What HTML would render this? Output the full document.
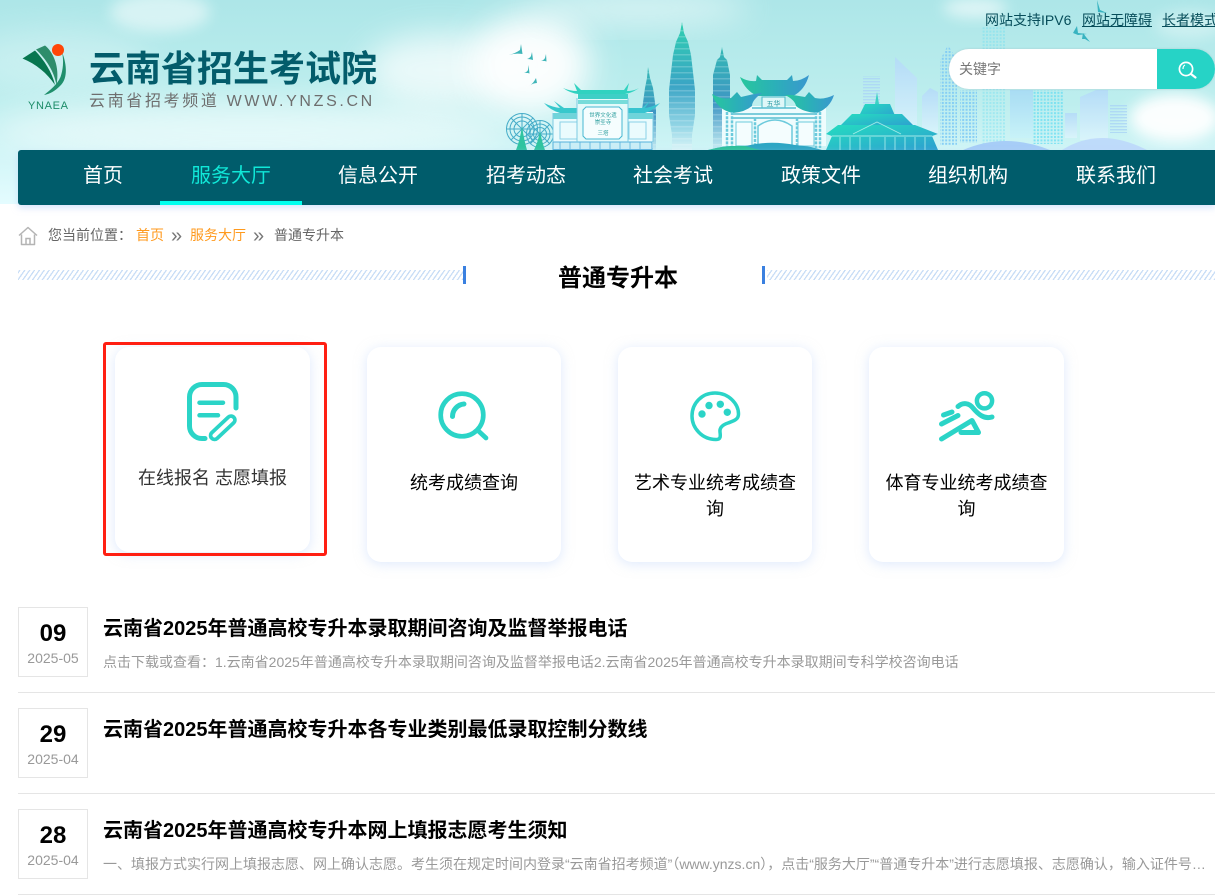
<!DOCTYPE html>
<html lang="zh-CN">
<head>
<meta charset="utf-8">
<title>普通专升本</title>
<style>
*{box-sizing:border-box;margin:0;padding:0}
html,body{width:1215px;height:896px;overflow:hidden;background:#fff;font-family:"Liberation Sans","Noto Sans CJK SC",sans-serif;color:#000}
a{color:inherit;text-decoration:none}
#page{position:relative;width:1215px;height:896px;overflow:hidden}
.t{position:absolute;white-space:nowrap}
.nav{position:absolute;left:18px;top:150px;width:1197px;height:55px;background:#005c6b;border-radius:3px 0 0 3px;box-shadow:0 3px 7px rgba(190,212,250,.6)}
.nav a{position:absolute;top:0;line-height:53px;font-size:20px;color:#fff;width:142px;text-align:center}
.nav a.on{color:#10e8d8}
.nav i{position:absolute;left:142px;top:51px;width:142px;height:4px;background:#00ffee}
.card{position:absolute;top:347px;width:195px;height:215px;background:#fff;border-radius:14px;box-shadow:0 2px 12px rgba(190,212,250,.5);text-align:center;font-size:18px;line-height:26px;padding:123px 15px 0}
.date{position:absolute;left:18px;width:70px;height:70px;border:1px solid #e5e5e5;text-align:center}
.date b{display:block;font-size:24px;line-height:28px;margin-top:12px}
.date span{display:block;font-size:14px;line-height:18px;color:#999;margin-top:1px}
.h{position:absolute;left:103px;font-size:20px;font-weight:bold;line-height:28px;white-space:nowrap}
.d{position:absolute;left:103px;width:1106px;font-size:14px;line-height:20px;color:#999;white-space:nowrap;overflow:hidden;text-overflow:ellipsis}
.l{position:absolute;left:18px;width:1197px;height:1px;background:#e5e5e5}
.stripe{position:absolute;top:270px;height:10px;background:repeating-linear-gradient(-55deg,#c8ddf6 0,#c8ddf6 1.3px,#fff 1.3px,#fff 4px)}
.bar{position:absolute;top:266px;width:3px;height:18px;background:#3a80e0}
</style>
</head>
<body>
<div id="page">
<svg width="1215" height="204" viewBox="0 0 1215 204" style="position:absolute;left:0;top:0">
<defs>
<linearGradient id="sky" x1="0" y1="0" x2="0" y2="1"><stop offset="0" stop-color="#ade6e8"/><stop offset=".5" stop-color="#bdeeee"/><stop offset="1" stop-color="#e4fcff"/></linearGradient>
<filter id="b1" x="-50%" y="-50%" width="200%" height="200%"><feGaussianBlur stdDeviation="16"/></filter>
<filter id="b2" x="-50%" y="-50%" width="200%" height="200%"><feGaussianBlur stdDeviation="7"/></filter>
<linearGradient id="pag" x1="0" y1="0" x2="0" y2="1"><stop offset="0" stop-color="#2ecfb0"/><stop offset=".5" stop-color="#3ba5c5"/><stop offset=".8" stop-color="#8fd3e4"/><stop offset="1" stop-color="#dcf6f8"/></linearGradient>
<linearGradient id="pag2" x1="0" y1="0" x2="0" y2="1"><stop offset="0" stop-color="#32b8b4"/><stop offset=".55" stop-color="#3f96c4"/><stop offset="1" stop-color="#c6edf3"/></linearGradient>
<linearGradient id="roof" x1="0" y1="0" x2="1" y2="0"><stop offset="0" stop-color="#28c79c"/><stop offset=".5" stop-color="#2bb0b8"/><stop offset="1" stop-color="#3a97cf"/></linearGradient>
<linearGradient id="dai" x1="0" y1="0" x2="1" y2="1"><stop offset="0" stop-color="#25dcc0"/><stop offset="1" stop-color="#2d9fd0"/></linearGradient>
<linearGradient id="bld" x1="0" y1="0" x2="0" y2="1"><stop offset="0" stop-color="#b4daf9"/><stop offset="1" stop-color="#dcf5fc"/></linearGradient>
<linearGradient id="bl2" x1="0" y1="0" x2="0" y2="1"><stop offset="0" stop-color="#9fd3f8"/><stop offset="1" stop-color="#c6f2fa"/></linearGradient>
<pattern id="tier" width="8" height="6" patternUnits="userSpaceOnUse"><rect y="0" width="8" height="1.500" fill="#fff" opacity=".2"/></pattern>
<pattern id="win" width="3.400" height="3.400" patternUnits="userSpaceOnUse"><rect width="2" height="2" fill="#7cc9f6"/></pattern>
<pattern id="win2" width="3.400" height="3.400" patternUnits="userSpaceOnUse"><rect width="2" height="2" fill="#5fdcf2"/></pattern>
<pattern id="hl" width="4" height="3" patternUnits="userSpaceOnUse"><rect width="4" height="1.400" fill="#acd6f6"/></pattern>
</defs>
<rect width="1215" height="204" fill="url(#sky)"/>
<g fill="#fff">
<ellipse cx="160" cy="12" rx="50" ry="20" opacity=".5" filter="url(#b2)"/>
<ellipse cx="60" cy="60" rx="90" ry="30" opacity=".25" filter="url(#b1)"/>
<ellipse cx="440" cy="70" rx="75" ry="36" opacity=".7" filter="url(#b1)"/>
<ellipse cx="530" cy="65" rx="60" ry="50" opacity=".95" filter="url(#b1)"/>
<ellipse cx="640" cy="8" rx="110" ry="16" opacity=".55" filter="url(#b1)"/>
<ellipse cx="250" cy="130" rx="260" ry="30" opacity=".5" filter="url(#b1)"/>
<ellipse cx="975" cy="8" rx="32" ry="10" opacity=".6" filter="url(#b2)"/>
<ellipse cx="1175" cy="118" rx="45" ry="24" opacity=".95" filter="url(#b2)"/>
<ellipse cx="1190" cy="25" rx="35" ry="14" opacity=".35" filter="url(#b2)"/>
</g>

<!-- city -->
<g opacity=".85">
<rect x="863" y="76" width="17" height="60" fill="url(#hl)"/>
<polygon points="895,57 917,78 917,135 895,135" fill="url(#bld)"/>
<polygon points="922,96 930,88 938,92 938,135 922,135" fill="url(#bld)"/>
<polygon points="940,60 948,45 957,60 957,145 940,145" fill="url(#win)"/>
<rect x="960" y="90" width="17" height="53" fill="url(#win)"/>
<rect x="982" y="27" width="23" height="120" fill="url(#win2)" opacity=".4"/>
<rect x="1010" y="90" width="23" height="48" fill="url(#bl2)" opacity=".75"/>
<rect x="1033" y="90" width="30" height="54" fill="url(#win2)" opacity=".8"/>
<rect x="1065" y="113" width="12" height="25" fill="url(#bld)"/>
<polygon points="1080,97 1096,90 1108,90 1108,140 1080,140" fill="url(#bld)"/>
<rect x="1110" y="105" width="17" height="28" fill="url(#hl)"/>
</g>
<path d="M963 150Q1005 132 1050 150Z" fill="#a7cdf7"/>
<path d="M1062 150Q1100 126 1147 150Z" fill="#bcd8fb" opacity=".9"/>

<!-- birds -->
<g fill="#3eb5b8">
<path d="M509 55Q516 53 520 50L521 44 522.500 54Q515 53 509 55Z"/>
<path d="M527 59Q530 58 531 56L532 52 533 60Q530 59 527 59Z"/>
<path d="M541 61Q544 60 545 58L546 54 546.500 61.500Q544 60.500 541 61Z"/>
<path d="M524 73Q527 72 528 70L528.500 65 529.500 73.500Q527 72.500 524 73Z"/>
<path d="M529 86Q533 84 536 78L537 83Q533 83 529 86Z"/>
<path d="M1073 33L1077 26 1078 33 1087 34 1078 35Z" fill="#38b3c0"/>
<path d="M1097 0L1100 10 1107 13 1098 12Z" fill="#38b3c0"/>
<path d="M1082 39L1083 33 1086 37 1090 42 1085 39Z" fill="#38b3c0"/>
</g>

<!-- pagodas -->
<g id="pg">
<polygon points="648,67 650,78 653,88 656,110 656,150 642,150 642,110 645,88 647,78" fill="url(#pag2)"/>
<polygon points="722,47 724,57 727,60 730,75 730,150 713,150 713,75 717,60 720,57" fill="url(#pag2)"/>
<polygon points="682,22 684,33 688,42 691,55 695,90 695,115 692,135 692,150 672,150 672,135 669,115 669,90 673,55 676,42 680,33" fill="url(#pag)"/>
<polygon points="648,67 650,78 653,88 656,110 656,150 642,150 642,110 645,88 647,78" fill="url(#tier)"/>
<polygon points="722,47 724,57 727,60 730,75 730,150 713,150 713,75 717,60 720,57" fill="url(#tier)"/>
<polygon points="682,22 684,33 688,42 691,55 695,90 695,115 692,135 692,150 672,150 672,135 669,115 669,90 673,55 676,42 680,33" fill="url(#tier)"/>
</g>

<!-- water wheels -->
<g fill="none" stroke="#45acc8" stroke-width="1">
<circle cx="522" cy="129" r="15.500"/><circle cx="522" cy="129" r="12"/><circle cx="522" cy="129" r="8"/>
<circle cx="540" cy="134" r="13.500"/><circle cx="540" cy="134" r="10"/><circle cx="540" cy="134" r="6.500"/>
<path d="M506.500 129h31M522 113.500v31M511 118l22 22M533 118l-22 22M526.500 134h27M540 120.500v27M530 124l20 20M550 124l-20 20"/>
</g>
<path d="M522 126Q524 140 527 150H516Q520 140 522 126Z" fill="#2fc4a0"/>
<path d="M540 131Q542 142 545 150H534Q538 142 540 131Z" fill="#2fc4a0"/>

<!-- left gate -->
<g>
<rect x="553" y="112" width="100" height="36" fill="#eafbfd"/>
<rect x="577" y="92" width="51" height="50" fill="#e4fafa"/>
<path d="M563 88Q570 91 577 91L574 83 581 90H624L629 83 627 91Q634 91 639 88 632 93 625 94H578Q570 93 563 88Z" fill="#30d2c0"/>
<path d="M578 94H628V99H578Z" fill="#3ecfc6"/>
<path d="M578 100H628V104H578Z" fill="#5bd4d2" opacity=".8"/>
<path d="M544 103Q552 107 560 108L554 101 564 108H577V113H560Q550 110 544 103Z" fill="#38c8cc"/>
<path d="M660 103Q652 107 645 108L650 101 642 108H628V113H645Q654 110 660 103Z" fill="#38c4d0"/>
<rect x="553" y="113" width="24" height="6" fill="#6fd4da"/>
<rect x="628" y="113" width="25" height="6" fill="#6fd4da"/>
<path d="M586 107H619L622 110V136L619 139H586L583 136V110Z" fill="#f5fdfe" stroke="#47b8d2" stroke-width="1"/>
<g fill="#2f9f9f" font-size="5.500" text-anchor="middle" font-family="Liberation Sans,Noto Sans CJK SC,sans-serif">
<text x="603" y="117">世界文化遗</text><text x="603" y="124">崇圣寺</text><text x="603" y="135">三塔</text>
</g>
<rect x="560" y="122" width="17" height="17" fill="none" stroke="#8ad2e6" stroke-width="1"/>
<rect x="629" y="122" width="17" height="17" fill="none" stroke="#8ad2e6" stroke-width="1"/>
<rect x="553" y="142" width="99" height="7.500" fill="#cbeef6" stroke="#56b2dc" stroke-width="1"/>
<path d="M560 142v8M570 142v8M580 142v8M590 142v8M600 142v8M610 142v8M620 142v8M630 142v8M640 142v8" stroke="#56b2dc" stroke-width=".8"/>
<path d="M553 113v29M577 98v44M628 98v44M653 113v29" stroke="#7ccbe2" stroke-width="1"/>
</g>

<!-- centre arch -->
<g>
<rect x="722" y="106" width="104" height="40" fill="#eefcfd"/>
<path d="M740 77Q748 82 756 81L757 75 762 80 787 80 792 75 793 81Q801 81 809 75 805 90 793 96H757Q745 90 740 77Z" fill="url(#roof)"/>
<path d="M712 94Q722 100 731 98L737 92 741 97 754 94 762 93Q752 100 752 106 745 112 733 113 717 110 712 94Z" fill="url(#roof)"/>
<path d="M834 95Q824 100 815 98L809 92 805 97 793 95 785 95Q795 100 796 106 803 112 817 113 830 108 834 95Z" fill="url(#roof)"/>
<rect x="762" y="97" width="23" height="11" fill="#dff7f8" stroke="#48b8c6" stroke-width="1"/>
<text x="773.500" y="106" font-size="7" fill="#2a9aa2" text-anchor="middle" font-family="Liberation Sans,Noto Sans CJK SC,sans-serif">五华</text>
<path d="M752 108H796M733 114H816M733 118H816" stroke="#56bdd0" stroke-width="1.500"/>
<path d="M727 112V148M732 112V148M755 118V146M797 118V146M820 112V148M816 112V148" stroke="#6ccadc" stroke-width="2.500" stroke-dasharray="3 1.200"/>
<path d="M736 122H752V146H736ZM798 122H814V146H798Z" fill="#f4fdfe" stroke="#6ccadc" stroke-width="1"/>
<path d="M758 146V126Q775 114 792 126V146" fill="#f4fdfe" stroke="#6ccadc" stroke-width="1.500"/>
<path d="M708 150Q725 145 745 146 770 140 795 145 810 146 822 150Z" fill="#2ea6c4"/>
<path d="M708 150Q725 145 745 146L760 150Z" fill="#2cc09a"/>
</g>

<!-- dai temple -->
<g>
<polygon points="877,92 879,104 875,104" fill="#3dd2c4"/>
<polygon points="865,104 890,104 896,118 858,118" fill="url(#dai)"/>
<polygon points="852,114 902,114 914,126 840,126" fill="url(#dai)"/>
<polygon points="826,134 838,125 915,125 938,134 932,136 938,150 826,150 832,136" fill="url(#dai)"/>
<path d="M853 134L877 122 901 134M832 136H932M840 137v13M850 137v13M860 137v13M870 137v13M885 137v13M895 137v13M905 137v13M915 137v13M925 137v13" fill="none" stroke="#c0f5ef" stroke-width=".9" opacity=".8"/>
</g>

<!-- logo -->
<path d="M22.500 58.500L35 50.500C44 60 52 72 55 85 47 73 36 64 22.500 58.500Z" fill="#07764f"/>
<path d="M36 49.500 45 45.500C53 52 60 66 56.500 85 54 71 46 59 36 49.500Z" fill="#2d8d6b"/>
<path d="M62 52C66 62 69 78 60 86 55 91 50 94 44 95 50 90 57 85 60.500 77 63 70 64 61 62 52Z" fill="#1f8f6c"/>
<circle cx="58" cy="50" r="6" fill="#ff4607"/>
<text x="28" y="109" font-size="11" fill="#1c8c68" textLength="40" font-family="Liberation Sans">YNAEA</text>
</svg>

<div class="t" style="left:89px;top:47px;font-size:36px;line-height:44px;font-weight:bold;color:#035c6b">云南省招生考试院</div>
<div class="t" style="left:89px;top:92px;font-size:16px;line-height:20px;letter-spacing:2.650px;color:#6e6e6e">云南省招考频道 WWW.YNZS.CN</div>

<div class="t" style="left:985px;top:11px;font-size:14px;line-height:18px;color:#064d5a">网站支持IPV6</div>
<a class="t" style="left:1082px;top:11px;font-size:14px;line-height:18px;color:#064d5a;text-decoration:underline">网站无障碍</a>
<a class="t" style="left:1162px;top:11px;font-size:14px;line-height:18px;color:#064d5a;text-decoration:underline">长者模式</a>

<div style="position:absolute;left:949px;top:49px;width:266px;height:40px;background:#fff;border-radius:20px;box-shadow:0 0 2px rgba(150,170,180,.45)"></div>
<div class="t" style="left:959px;top:60px;font-size:14px;line-height:18px;color:#757575">关键字</div>
<div style="position:absolute;left:1157px;top:49px;width:58px;height:40px;background:#26d3c6;border-radius:0 20px 20px 0"></div>
<svg width="24" height="24" viewBox="0 0 24 24" style="position:absolute;left:1176px;top:59px">
<circle cx="10" cy="10" r="6.600" fill="none" stroke="#fff" stroke-width="1.700"/>
<path d="M7 10q0-3 2-4" fill="none" stroke="#fff" stroke-width="1.200"/>
<path d="M15 15l4.500 3.500" stroke="#fff" stroke-width="2.200" stroke-linecap="round"/>
</svg>

<div class="nav">
<a style="left:14px">首页</a>
<a class="on" style="left:142px">服务大厅</a>
<a style="left:289px">信息公开</a>
<a style="left:437px">招考动态</a>
<a style="left:584px">社会考试</a>
<a style="left:732px">政策文件</a>
<a style="left:879px">组织机构</a>
<a style="left:1027px">联系我们</a>
<i></i>
</div>

<!-- breadcrumb -->
<svg width="20" height="20" viewBox="0 0 20 20" style="position:absolute;left:18px;top:226px">
<path d="M1 9.500 10 1.500l9 8M3.500 8.500V18.500h13V8.500" fill="none" stroke="#b4b4b4" stroke-width="1.500" stroke-linejoin="round"/>
<path d="M8 18.500V12.500h4v6" fill="none" stroke="#b4b4b4" stroke-width="1.500"/>
</svg>
<div class="t" style="left:48px;top:226px;font-size:14px;line-height:18px;color:#666">您当前位置：</div>
<a class="t" style="left:136px;top:226px;font-size:14px;line-height:18px;color:#ff9a1e">首页</a>
<div class="t" style="left:171px;top:224px;font-size:20px;line-height:24px;color:#777">»</div>
<a class="t" style="left:190px;top:226px;font-size:14px;line-height:18px;color:#ff9a1e">服务大厅</a>
<div class="t" style="left:253px;top:224px;font-size:20px;line-height:24px;color:#777">»</div>
<div class="t" style="left:274px;top:226px;font-size:14px;line-height:18px;color:#666">普通专升本</div>

<!-- section title -->
<div class="stripe" style="left:18px;width:445px"></div>
<div class="bar" style="left:463px"></div>
<div class="t" style="left:558px;top:262px;font-size:24px;line-height:34px;font-weight:bold;color:#000">普通专升本</div>
<div class="bar" style="left:762px"></div>
<div class="stripe" style="left:767px;width:448px"></div>

<!-- cards -->
<div class="card" style="left:115px;width:195px;height:205px;color:#333;padding:118px 0 0;"><span style="font-size:18px">在线报名 志愿填报</span></div>
<div class="card" style="left:367px;width:194px">统考成绩查询</div>
<div class="card" style="left:618px;width:194px">艺术专业统考成绩查询</div>
<div class="card" style="left:869px;width:195px">体育专业统考成绩查询</div>
<div style="position:absolute;left:103px;top:342px;width:224px;height:214px;border:3px solid #ff1f12;border-radius:3px"></div>

<svg width="1215" height="896" viewBox="0 0 1215 896" style="position:absolute;left:0;top:0;pointer-events:none" fill="none" stroke="#2bd4c7" stroke-linecap="round" stroke-linejoin="round">
<!-- form -->
<path d="M205 438.500H202A12.500 12.500 0 0 1 189.500 426V397A12.500 12.500 0 0 1 202 384.500H223.500A12.500 12.500 0 0 1 236 397V408" stroke-width="5"/>
<path d="M199.500 402.700H223M199.500 415.300H218" stroke-width="4.500"/>
<path d="M214.500 435.500 231 420" stroke-width="11.500"/>
<path d="M214.500 435.500 231 420" stroke-width="4" stroke="#fff"/>
<!-- magnifier -->
<circle cx="462" cy="415" r="21.300" stroke-width="4.700"/>
<path d="M479 431.500 486 438" stroke-width="4.700"/>
<path d="M452.500 416.500C452.500 410 457.500 404.500 464 404" stroke-width="5"/>
<!-- palette -->
<path d="M715 393C729 393 738.500 404 738.500 414C738.500 420 733 421 728 423C722 425 719.500 428 720 432C720.500 436 721 439.500 716 439.500C702 439.500 692 428 692 416C692 403 702 393 715 393Z" stroke-width="3.500"/>
<g fill="#2bd4c7" stroke="none"><circle cx="702" cy="414" r="3.700"/><circle cx="709" cy="405.500" r="3.700"/><circle cx="720.300" cy="404.300" r="3.700"/><circle cx="727.300" cy="412.300" r="3.700"/></g>
<!-- runner -->
<circle cx="984.500" cy="400.800" r="7.600" stroke-width="4.500"/>
<path d="M958 406.500C963 402 969 403 973 408C978 414 984 419.500 992 417" stroke-width="5"/>
<path d="M941.500 439 972 420.500 978.500 432.500H961" stroke-width="5"/>
<path d="M943.500 415 952 412M941.500 424 958 415.500" stroke-width="5"/>
</svg>

<!-- list -->
<div class="date" style="top:607px"><b>09</b><span>2025-05</span></div>
<a class="h" style="top:615px">云南省2025年普通高校专升本录取期间咨询及监督举报电话</a>
<div class="d" style="top:652px">点击下载或查看：1.云南省2025年普通高校专升本录取期间咨询及监督举报电话2.云南省2025年普通高校专升本录取期间专科学校咨询电话</div>
<div class="l" style="top:692px"></div>

<div class="date" style="top:708px"><b>29</b><span>2025-04</span></div>
<a class="h" style="top:716px">云南省2025年普通高校专升本各专业类别最低录取控制分数线</a>
<div class="l" style="top:793px"></div>

<div class="date" style="top:809px"><b>28</b><span>2025-04</span></div>
<a class="h" style="top:817px">云南省2025年普通高校专升本网上填报志愿考生须知</a>
<div class="d" style="top:854px">一、填报方式实行网上填报志愿、网上确认志愿。考生须在规定时间内登录“云南省招考频道”（www.ynzs.cn），点击“服务大厅”“普通专升本”进行志愿填报、志愿确认，输入证件号码及密码后进行填报操作。</div>
<div class="l" style="top:894px"></div>
</div>
</body>
</html>
